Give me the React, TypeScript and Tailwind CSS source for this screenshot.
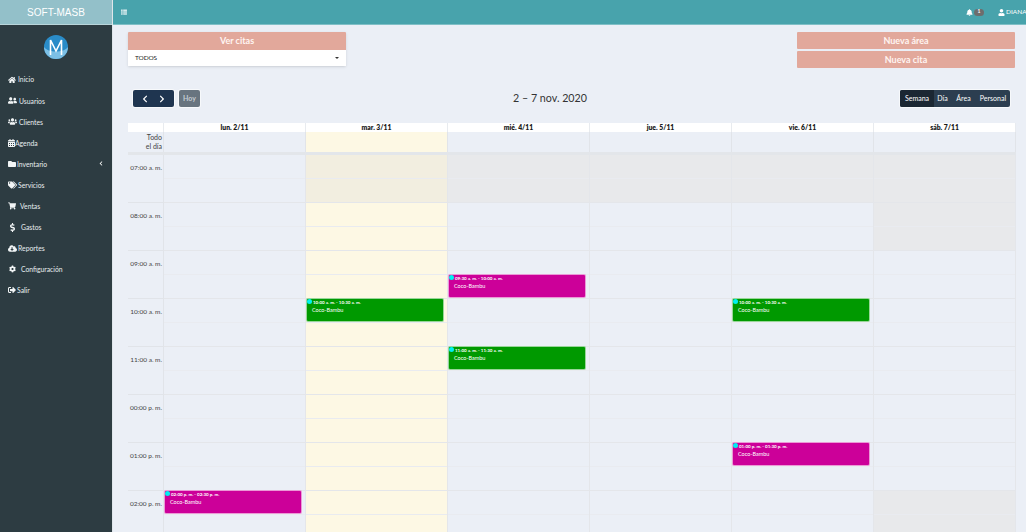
import {
  FaBell,
  FaCalendarAlt,
  FaChevronLeft,
  FaChevronRight,
  FaCloudDownloadAlt,
  FaCog,
  FaDollarSign,
  FaFolder,
  FaHome,
  FaShoppingCart,
  FaSignOutAlt,
  FaTags,
  FaThList,
  FaUser,
  FaUserFriends,
  FaUsers,
} from "react-icons/fa"
import type { IconType } from "react-icons"

const menu: { label: string; icon: IconType; gap: string; iconClass: string; arrow?: boolean }[] = [
  { label: "Inicio", icon: FaHome, gap: "gap-[2px]", iconClass: "w-[8px] h-[8px]" },
  { label: "Usuarios", icon: FaUserFriends, gap: "gap-[2px]", iconClass: "w-[9px] h-[9px]" },
  { label: "Clientes", icon: FaUsers, gap: "gap-[2px]", iconClass: "w-[9px] h-[9px]" },
  { label: "Agenda", icon: FaCalendarAlt, gap: "gap-0", iconClass: "w-[7px] h-[8px]" },
  { label: "Inventario", icon: FaFolder, gap: "gap-[1px]", iconClass: "w-[8px] h-[8px]", arrow: true },
  { label: "Servicios", icon: FaTags, gap: "gap-[1px]", iconClass: "w-[9px] h-[8px]" },
  { label: "Ventas", icon: FaShoppingCart, gap: "gap-[4px]", iconClass: "w-[8px] h-[8px]" },
  { label: "Gastos", icon: FaDollarSign, gap: "gap-[5px]", iconClass: "w-[7px] h-[9px] ml-[1px]" },
  { label: "Reportes", icon: FaCloudDownloadAlt, gap: "gap-[1px]", iconClass: "w-[9px] h-[9px]" },
  { label: "Configuración", icon: FaCog, gap: "gap-[5px]", iconClass: "w-[7px] h-[8px] ml-[1px]" },
  { label: "Salir", icon: FaSignOutAlt, gap: "gap-[1px]", iconClass: "w-[8px] h-[8px]" },
]

const days = ["lun. 2/11", "mar. 3/11", "mié. 4/11", "jue. 5/11", "vie. 6/11", "sáb. 7/11"]
const hours = ["07:00 a. m.", "08:00 a. m.", "09:00 a. m.", "10:00 a. m.", "11:00 a. m.", "00:00 p. m.", "01:00 p. m.", "02:00 p. m."]

const events = [
  { hour: 2, day: 2, half: true, time: "09:30 a. m. - 10:00 a. m.", color: "bg-[#cc0099]" },
  { hour: 3, day: 1, half: false, time: "10:00 a. m. - 10:30 a. m.", color: "bg-[#009900]" },
  { hour: 3, day: 4, half: false, time: "10:00 a. m. - 10:30 a. m.", color: "bg-[#009900]" },
  { hour: 4, day: 2, half: false, time: "11:00 a. m. - 11:30 a. m.", color: "bg-[#009900]" },
  { hour: 6, day: 4, half: false, time: "01:00 p. m. - 01:30 p. m.", color: "bg-[#cc0099]" },
  { hour: 7, day: 0, half: false, time: "02:00 p. m. - 02:30 p. m.", color: "bg-[#cc0099]" },
]

function isClosed(hour: number, day: number) {
  if (day === 5) return hour < 2 || hour === 7
  return hour === 0 && day >= 2
}

function cellColor(hour: number, day: number) {
  if (day === 1) return hour === 0 ? "bg-[#f2eee0]" : "bg-[#fdf8e4]"
  return isClosed(hour, day) ? "bg-[#e8e9eb]" : ""
}

function Sidebar() {
  return (
    <aside className="w-[113px] shrink-0 bg-[#2d3c42] border-r border-[#dfe6ea]">
      <div className="h-[25px] bg-[#93c0c9] border-b border-[#b9d6db] flex items-center justify-center text-[10px] text-white font-['Liberation_Sans',sans-serif]">
        SOFT-MASB
      </div>
      <div className="flex justify-center pt-[10px] pb-[10px]">
        <svg width="24" height="24" viewBox="0 0 24 24">
          <circle cx="12" cy="12" r="12" fill="#2a8cc8" />
          <path d="M0 12a12 12 0 0 0 24 0c-4 6-20 6-24 0z" fill="#7cc0e6" />
          <path d="M6.5 20V5l5.5 11 5.5-11v15" fill="none" stroke="#fff" strokeWidth="1.6" />
        </svg>
      </div>
      <nav className="flex flex-col">
        {menu.map((item) => (
          <div key={item.label} className={`h-[21.1px] pl-[8px] pr-[8px] flex items-center text-[6.8px] text-[#e8eef0] ${item.gap}`}>
            <item.icon className={`${item.iconClass} shrink-0 text-[#f2f5f6]`} />
            <span>{item.label}</span>
            {item.arrow && <FaChevronLeft className="ml-auto mr-[1px] w-[4px] h-[5px] text-white" />}
          </div>
        ))}
      </nav>
    </aside>
  )
}

function TopBar() {
  return (
    <header className="h-[25px] shrink-0 bg-[#48a3ac] border-b border-[#7fbfc6] flex items-center pl-[8px] text-white">
      <FaThList className="w-[6px] h-[6px] text-[#d5eaec]" />
      <div className="ml-auto flex items-center">
        <FaBell className="w-[7px] h-[7px]" />
        <span className="ml-[1px] w-[10px] h-[7px] rounded-full bg-[#6d6d6d] text-[5px] font-bold flex items-center justify-center">1</span>
        <FaUser className="ml-[14px] w-[7px] h-[7px]" />
        <span className="ml-[1px] w-[20px] text-[6.5px] whitespace-nowrap">DIANA</span>
      </div>
    </header>
  )
}

function Filters() {
  return (
    <div className="flex justify-between items-start">
      <div className="w-[218px] shadow-sm">
        <div className="h-[18px] bg-[#e2a89b] rounded-t-[1px] flex items-center justify-center text-[9px] font-bold text-[#fff5f2]">Ver citas</div>
        <div className="h-[16px] bg-white flex items-center justify-between pl-[7px] pr-[7px] text-[6.5px] tracking-[-0.1px] text-[#222]">
          <span>TODOS</span>
          <span className="border-x-[2px] border-t-[2px] border-x-transparent border-t-[#333]" />
        </div>
      </div>
      <div className="w-[218px] flex flex-col gap-[2px]">
        <div className="h-[17px] bg-[#e2a89b] rounded-[1px] flex items-center justify-center text-[9px] font-bold text-[#fff5f2]">Nueva área</div>
        <div className="h-[17px] bg-[#e2a89b] rounded-[1px] flex items-center justify-center text-[9px] font-bold text-[#fff5f2]">Nueva cita</div>
      </div>
    </div>
  )
}

function Toolbar() {
  return (
    <div className="mt-[22px] px-[5px] flex justify-between items-center h-[17px]">
      <div className="flex gap-[5px]">
        <div className="w-[41px] h-[17px] bg-[#1f3550] rounded-[2px] ring-1 ring-white/60 flex items-center justify-around px-[3px] text-white">
          <FaChevronLeft className="w-[6px] h-[8px]" />
          <FaChevronRight className="w-[6px] h-[8px]" />
        </div>
        <div className="w-[21px] h-[17px] bg-[#68747f] rounded-[2px] ring-1 ring-white/60 flex items-center justify-center text-[7px] font-bold text-[#c5ccd2]">Hoy</div>
      </div>
      <div className="text-[10.7px] text-[#333]">2 – 7 nov. 2020</div>
      <div className="w-[110px] h-[17px] rounded-[2px] ring-1 ring-white/60 overflow-hidden bg-[#2c3e50] flex items-center text-[7px] text-white">
        <span className="w-[34px] h-full bg-[#1b2733] flex items-center justify-center">Semana</span>
        <span className="w-[17px] text-center">Día</span>
        <span className="w-[25px] text-center">Área</span>
        <span className="flex-1 text-center">Personal</span>
      </div>
    </div>
  )
}

function Calendar() {
  return (
    <div className="mt-[16px] w-[888px] grid grid-cols-[36px_repeat(6,142px)]">
      <div className="h-[9px] bg-white border-r border-[#e8ebef]" />
      {days.map((d) => (
        <div key={d} className="h-[9px] bg-white border-r border-[#e8ebef] flex items-center justify-center text-[6.8px] font-extrabold text-[#1a1a1a]">{d}</div>
      ))}

      <div className="h-[20px] border-r border-[#e1e4e9] pr-[1px] pt-[1px] text-right text-[7px] leading-[9px] text-[#444]">
        Todo<br />el día
      </div>
      {days.map((d, i) => (
        <div key={d} className={`h-[20px] border-r border-[#e1e4e9] ${i === 1 ? "bg-[#fdf8e4]" : ""}`} />
      ))}
      <div className="col-span-7 h-[3px] bg-[#e3e6ea]" />

      {hours.map((h, hour) => (
        <div key={h} className="contents">
          <div className="h-[48px] border-r border-b border-[#e1e4e9] pr-[1px] pt-[9px] text-right text-[6.5px] leading-[8px] whitespace-nowrap text-[#444]">{h}</div>
          {days.map((d, day) => {
            const event = events.find((e) => e.hour === hour && e.day === day)
            return (
              <div key={d} className={`relative h-[48px] border-r border-b border-[#e4e6ea] ${cellColor(hour, day)}`}>
                <div className="h-[24px] border-b border-[#e9ebf0]" />
                {event && (
                  <div className={`absolute z-10 left-0 w-[138px] h-[24px] rounded-[2px] border border-white/60 pl-[6px] text-white ${event.color} ${event.half ? "top-[23px]" : "-top-[1px]"}`}>
                    <span className="absolute left-0 top-0 w-[5px] h-[5px] rounded-full bg-[#00f0f0]" />
                    <div className="text-[4.5px] font-bold leading-[7px]">{event.time}</div>
                    <div className="text-[5.5px] leading-[6px] mt-[1px] -ml-[1px]">Coco-Bambu</div>
                  </div>
                )}
              </div>
            )
          })}
        </div>
      ))}
    </div>
  )
}

export default function App() {
  return (
    <div className="w-[1026px] h-[532px] overflow-hidden flex bg-[#ebeff6] font-['Lato',sans-serif]">
      <Sidebar />
      <div className="flex-1 flex flex-col min-w-0">
        <TopBar />
        <main className="pl-[15px] pr-[11px] pt-[7px]">
          <Filters />
          <Toolbar />
          <Calendar />
        </main>
      </div>
    </div>
  )
}
